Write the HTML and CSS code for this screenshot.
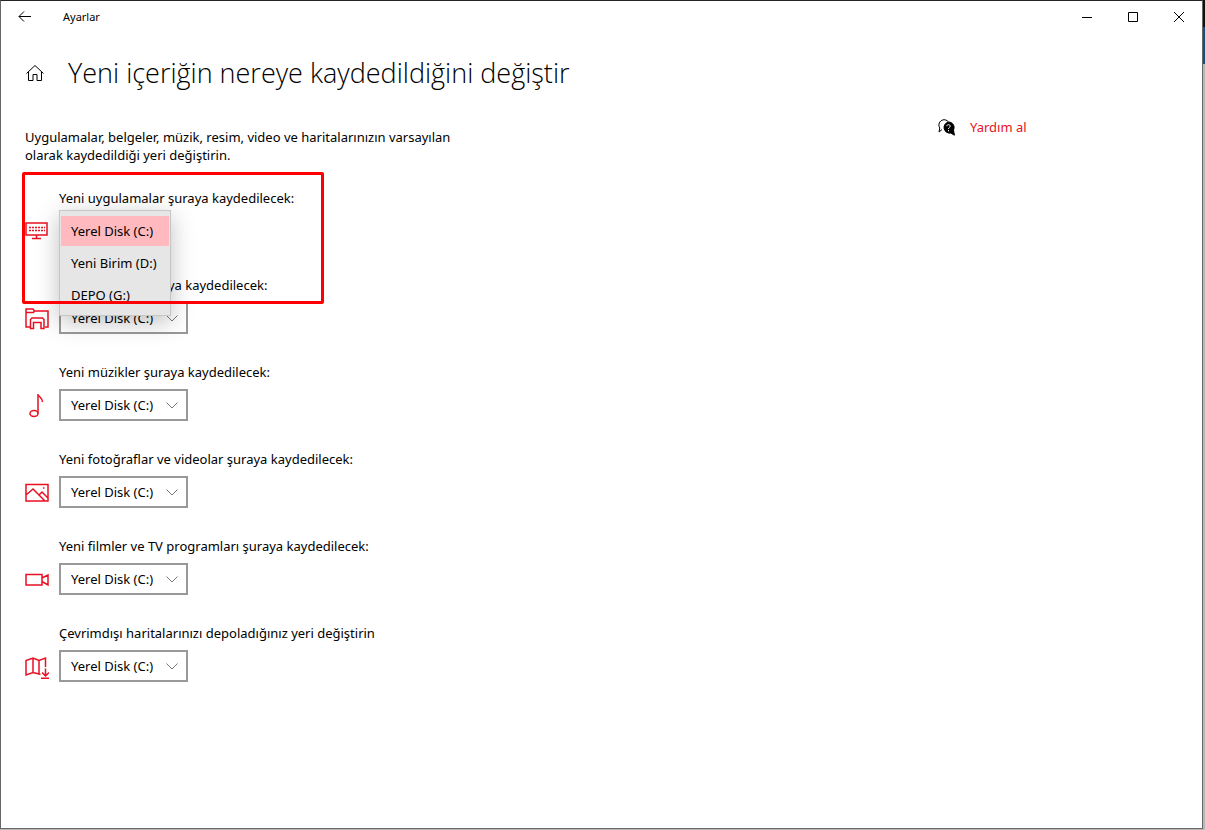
FILE: index.html
```html
<!DOCTYPE html>
<html lang="tr">
<head>
    <meta charset="UTF-8">
    <meta name="viewport" content="width=device-width, initial-scale=1.0">
    <title>Ayarlar</title>
    <link rel="stylesheet" href="styles.css">
</head>
<body>
    <div class="window">
        <header class="titlebar">
            <button class="back-button" aria-label="Geri">
                <svg width="14" height="12" viewBox="0 0 14 12"><path d="M1 5.500h12M6 .5L1 5.500l5 5"/></svg>
            </button>
            <span class="app-name">Ayarlar</span>
            <div class="window-buttons">
                <button aria-label="Simge durumuna küçült">
                    <svg width="10" height="10" viewBox="0 0 10 10"><path d="M0 5.500h10"/></svg>
                </button>
                <button aria-label="Ekranı kapla">
                    <svg width="10" height="10" viewBox="0 0 10 10"><path d="M.5.5h9v9h-9z"/></svg>
                </button>
                <button aria-label="Kapat">
                    <svg width="10" height="10" viewBox="0 0 10 10"><path d="M0 0l10 10M10 0L0 10"/></svg>
                </button>
            </div>
        </header>

        <div class="heading">
            <a href="#" class="home" aria-label="Giriş">
                <svg width="20" height="18" viewBox="0 0 20 18"><path d="M1.500 9.500L10 1.500l8.500 8M3.500 8v8.500H8v-6h4v6h4.500V8"/></svg>
            </a>
            <h1>Yeni içeriğin nereye kaydedildiğini değiştir</h1>
        </div>

        <div class="page">
            <main>
                <p class="description">Uygulamalar, belgeler, müzik, resim, video ve haritalarınızın varsayılan olarak kaydedildiği yeri değiştirin.</p>

                <div class="locations">
                    <div class="location open">
                        <span class="label" id="apps-label">Yeni uygulamalar şuraya kaydedilecek:</span>
                        <svg class="icon" width="24" height="26" viewBox="0 0 24 26">
                            <path d="M1 5h21v12H1zM11.500 17v3M7 20.500h9"/>
                            <path class="keys" d="M4 9.500h16M4 12.500h16"/>
                        </svg>
                        <div class="picker">
                            <div class="dropdown" role="listbox" aria-labelledby="apps-label">
                                <button role="option" aria-selected="true" class="selected">Yerel Disk (C:)</button>
                                <button role="option" aria-selected="false">Yeni Birim (D:)</button>
                                <button role="option" aria-selected="false">DEPO (G:)</button>
                            </div>
                        </div>
                        <div class="highlight"></div>
                    </div>

                    <div class="location">
                        <label class="label" for="documents">Yeni belgeler şuraya kaydedilecek:</label>
                        <svg class="icon" width="24" height="26" viewBox="0 0 24 26">
                            <path d="M5 22H1V4h7l1.500 2H23v16h-3M1 7.500h7.500l1-1.500M5.500 23.500v-9L7 13h10.500l1.500 1.500v9h-3v-6H8.500v6z"/>
                        </svg>
                        <div class="picker">
                            <select id="documents">
                                <option>Yerel Disk (C:)</option>
                                <option>Yeni Birim (D:)</option>
                                <option>DEPO (G:)</option>
                            </select>
                            <svg class="chevron" width="12" height="7" viewBox="0 0 12 7"><path d="M.5.5L6 6 11.500.5"/></svg>
                        </div>
                    </div>

                    <div class="location">
                        <label class="label" for="music">Yeni müzikler şuraya kaydedilecek:</label>
                        <svg class="icon" width="24" height="26" viewBox="0 0 24 26">
                            <ellipse cx="9" cy="21.500" rx="4" ry="3"/>
                            <path d="M13 21.500V2c.5 3 4.500 3.500 4.500 8"/>
                        </svg>
                        <div class="picker">
                            <select id="music">
                                <option>Yerel Disk (C:)</option>
                                <option>Yeni Birim (D:)</option>
                                <option>DEPO (G:)</option>
                            </select>
                            <svg class="chevron" width="12" height="7" viewBox="0 0 12 7"><path d="M.5.5L6 6 11.500.5"/></svg>
                        </div>
                    </div>

                    <div class="location">
                        <label class="label" for="photos">Yeni fotoğraflar ve videolar şuraya kaydedilecek:</label>
                        <svg class="icon" width="24" height="26" viewBox="0 0 24 26">
                            <path d="M1 5.500h22v16.500H1zM1 16l7-6 12 12M14 16l3-3 6 6"/>
                            <path d="M18 9h1.500"/>
                        </svg>
                        <div class="picker">
                            <select id="photos">
                                <option>Yerel Disk (C:)</option>
                                <option>Yeni Birim (D:)</option>
                                <option>DEPO (G:)</option>
                            </select>
                            <svg class="chevron" width="12" height="7" viewBox="0 0 12 7"><path d="M.5.5L6 6 11.500.5"/></svg>
                        </div>
                    </div>

                    <div class="location">
                        <label class="label" for="movies">Yeni filmler ve TV programları şuraya kaydedilecek:</label>
                        <svg class="icon" width="24" height="26" viewBox="0 0 24 26">
                            <path d="M1 8.500h16v10.500H1zM17 12l6-3v10l-6-3.500"/>
                        </svg>
                        <div class="picker">
                            <select id="movies">
                                <option>Yerel Disk (C:)</option>
                                <option>Yeni Birim (D:)</option>
                                <option>DEPO (G:)</option>
                            </select>
                            <svg class="chevron" width="12" height="7" viewBox="0 0 12 7"><path d="M.5.5L6 6 11.500.5"/></svg>
                        </div>
                    </div>

                    <div class="location">
                        <label class="label" for="maps">Çevrimdışı haritalarınızı depoladığınız yeri değiştirin</label>
                        <svg class="icon" width="24" height="26" viewBox="0 0 24 26">
                            <path d="M15.500 21.500L14 21l-6-1.500L1 22V7.500L8 5l6 2.500L20.500 5v9M8 5v14.500M14 7.500V21M20.500 15.500v7M17 19.500l3.500 3.500 3.500-3.500M16 25.200h8"/>
                        </svg>
                        <div class="picker">
                            <select id="maps">
                                <option>Yerel Disk (C:)</option>
                                <option>Yeni Birim (D:)</option>
                                <option>DEPO (G:)</option>
                            </select>
                            <svg class="chevron" width="12" height="7" viewBox="0 0 12 7"><path d="M.5.5L6 6 11.500.5"/></svg>
                        </div>
                    </div>
                </div>
            </main>

            <aside>
                <a href="#" class="help">
                    <svg width="17" height="17" viewBox="0 0 17 17">
                        <path class="bubble" d="M4 10.500L1 13l.8-4A5 5 0 1 1 10.500 3"/>
                        <path class="bubble-dark" d="M10.500 3a5.500 5.500 0 0 1 5 8l.9 5.200-3.600-2.200a5.500 5.500 0 1 1-2.300-11z"/>
                        <path class="question" d="M8.800 7.200c0-2.200 3.400-2.100 3.400 0 0 1.300-1.700 1.200-1.700 2.700M10.500 11v1.300"/>
                    </svg>
                    <span>Yardım al</span>
                </a>
            </aside>
        </div>
    </div>
</body>
</html>
```

FILE: styles.css
```css
* {
    box-sizing: border-box;
}
body {
    margin: 0;
    min-height: 100vh;
    padding: 0 2px 1px 0;
    display: flex;
    font-family: "Noto Sans", "Open Sans", sans-serif;
    font-size: 13px;
    line-height: 20px;
    color: #000;
    background: linear-gradient(#111 27px, #12517c 27px, #12517c 64px, #b9b7b7 64px);
}
svg {
    display: block;
    fill: none;
    stroke: #000;
}
button {
    font: inherit;
    color: inherit;
    border: none;
    background: none;
    padding: 0;
}
a {
    color: #e81123;
    text-decoration: none;
}
.window {
    flex: 1;
    background-color: #fff;
    border: 1px solid #666;
    border-top-color: #252327;
}

/* title bar */
.titlebar {
    display: flex;
    align-items: center;
    height: 32px;
}
.back-button {
    width: 48px;
    height: 32px;
    display: flex;
    justify-content: center;
    align-items: center;
}
.app-name {
    font-size: 11px;
    padding-left: 14px;
}
.window-buttons {
    display: flex;
    margin-left: auto;
}
.window-buttons button {
    width: 46px;
    height: 32px;
    display: flex;
    justify-content: center;
    align-items: center;
}

.heading {
    display: flex;
    align-items: center;
    gap: 23px;
    padding: 20px 24px 0;
}
h1 {
    margin: 0;
    font-family: "Open Sans", "Noto Sans", sans-serif;
    font-size: 27px;
    font-weight: 300;
    line-height: 40px;
}

.page {
    display: grid;
    grid-template-columns: 1fr 264px;
    padding: 25px 0 24px 24px;
}
.description {
    max-width: 450px;
    margin: 10px 0 24px;
    line-height: 18px;
}

/* one row for each kind of content */
.locations {
    display: grid;
    gap: 28px;
}
.location {
    display: grid;
    grid-template-columns: 24px 1fr;
    column-gap: 10px;
    row-gap: 7px;
    align-items: center;
}
.label {
    grid-column: 2;
}
.icon {
    stroke: #e81123;
    stroke-width: 1.5;
}
.keys {
    stroke-dasharray: 2 1;
}
.picker {
    position: relative;
    width: 129px;
    height: 32px;
}
select {
    appearance: none;
    width: 100%;
    height: 100%;
    padding: 0 10px;
    font: inherit;
    color: inherit;
    background-color: #fff;
    border: 2px solid #999;
    border-radius: 0;
}
.chevron {
    position: absolute;
    right: 10px;
    top: 13px;
    stroke: #777;
    pointer-events: none;
}

.open {
    position: relative;
    z-index: 1;
}
.dropdown {
    position: absolute;
    left: 0;
    top: -5px;
    width: 112px;
    display: grid;
    gap: 2px;
    padding: 5px 1px;
    background-color: #e6e6e6;
    border: 1px solid #c6c6c6;
    box-shadow: 0 6px 22px rgba(0, 0, 0, 0.25);
}
.dropdown button {
    height: 30px;
    padding: 0 10px;
    text-align: left;
}
.dropdown .selected {
    background-color: #ffb9bf;
}
.highlight {
    position: absolute;
    left: -3px;
    top: -16px;
    width: 302px;
    height: 132px;
    border: 3px solid #ff0000;
    border-radius: 2px;
    pointer-events: none;
}

.help {
    display: flex;
    align-items: center;
    gap: 15px;
    line-height: 18px;
}
.bubble-dark {
    fill: #000;
}
.question {
    stroke: #fff;
}
```
